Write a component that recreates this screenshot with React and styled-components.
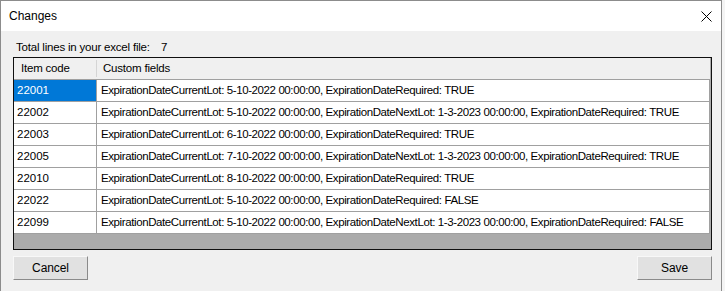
import React from "react";
import styled, { createGlobalStyle } from "styled-components";

const GlobalStyle = createGlobalStyle`
  html, body {
    margin: 0;
    padding: 0;
    background: #f4f4f4;
  }
  body {
    font-family: "Liberation Sans", Arial, sans-serif;
    font-size: 11.5px;
    letter-spacing: -0.4px;
    color: #000;
  }
`;

const Window = styled.div`
  width: 722px;
  height: 292px;
  box-sizing: border-box;
  border: 1px solid #8c8c8c;
  background: #f0f0f0;
  display: flex;
  flex-direction: column;
  overflow: hidden;
`;

const TitleBar = styled.div`
  height: 30px;
  flex: none;
  background: #fff;
  display: flex;
  align-items: center;
  justify-content: space-between;
  padding: 0 9px 0 8px;
`;

const Title = styled.span`
  font-size: 12px;
  letter-spacing: 0;
`;

const CloseButton = styled.button`
  border: 0;
  background: transparent;
  padding: 0;
  width: 12px;
  height: 12px;
  display: flex;
  align-items: center;
  justify-content: center;
  cursor: default;
`;

const Content = styled.div`
  padding: 8px 0 0 12px;
  display: flex;
  flex-direction: column;
`;

const Summary = styled.div`
  display: flex;
  height: 16px;
  line-height: 16px;
  padding-left: 3px;
  margin-bottom: 2px;
  white-space: nowrap;
  letter-spacing: -0.2px;
`;

const SummaryLabel = styled.span`
  width: 145px;
`;

const Grid = styled.div`
  width: 699px;
  height: 193px;
  box-sizing: border-box;
  border: 1px solid #101010;
  background: #ababab;
`;

const Row = styled.div`
  display: grid;
  grid-template-columns: 83px 613px;
  height: 22px;
`;

const HeaderCell = styled.div`
  position: relative;
  box-sizing: border-box;
  background: #f0f0f0;
  border-bottom: 1px solid #a0a0a0;
  padding-left: ${(p) => (p.$first ? "7px" : "6px")};
  line-height: 21px;
  white-space: nowrap;
  overflow: hidden;
  letter-spacing: -0.2px;

  &::after {
    content: "";
    display: ${(p) => (p.$first ? "block" : "none")};
    position: absolute;
    right: 0;
    top: 2px;
    bottom: 2px;
    width: 1px;
    background: #d5d5d5;
  }
`;

const Cell = styled.div`
  box-sizing: border-box;
  background: ${(p) => (p.$selected ? "#0078d7" : "#fff")};
  color: ${(p) => (p.$selected ? "#fff" : "#000")};
  border-right: 1px solid #a0a0a0;
  border-bottom: 1px solid #a0a0a0;
  padding-left: ${(p) => (p.$first ? "3px" : "4px")};
  line-height: 21px;
  white-space: nowrap;
  overflow: hidden;
  letter-spacing: ${(p) => (p.$first ? "0" : "-0.4px")};
`;

const Buttons = styled.div`
  display: flex;
  justify-content: space-between;
  width: 699px;
  margin-top: 6px;
`;

const Button = styled.button`
  width: 75px;
  height: 24px;
  box-sizing: border-box;
  background: #e1e1e1;
  border: 1px solid #adadad;
  border-top-color: #f8f8f8;
  border-left-color: #f8f8f8;
  border-right-color: #8a8a8a;
  border-bottom-color: #8a8a8a;
  font-family: inherit;
  font-size: 12px;
  letter-spacing: -0.1px;
  color: #000;
  padding: 0;
`;

const rows = [
  ["22001", "ExpirationDateCurrentLot: 5-10-2022 00:00:00, ExpirationDateRequired: TRUE"],
  ["22002", "ExpirationDateCurrentLot: 5-10-2022 00:00:00, ExpirationDateNextLot: 1-3-2023 00:00:00, ExpirationDateRequired: TRUE"],
  ["22003", "ExpirationDateCurrentLot: 6-10-2022 00:00:00, ExpirationDateRequired: TRUE"],
  ["22005", "ExpirationDateCurrentLot: 7-10-2022 00:00:00, ExpirationDateNextLot: 1-3-2023 00:00:00, ExpirationDateRequired: TRUE"],
  ["22010", "ExpirationDateCurrentLot: 8-10-2022 00:00:00, ExpirationDateRequired: TRUE"],
  ["22022", "ExpirationDateCurrentLot: 5-10-2022 00:00:00, ExpirationDateRequired: FALSE"],
  ["22099", "ExpirationDateCurrentLot: 5-10-2022 00:00:00, ExpirationDateNextLot: 1-3-2023 00:00:00, ExpirationDateRequired: FALSE"],
];

const App = () => {
  return (
    <>
      <GlobalStyle />
      <Window>
        <TitleBar>
          <Title>Changes</Title>
          <CloseButton aria-label="Close">
            <svg width="11" height="11" viewBox="0 0 11 11">
              <path d="M0.5 0.5 L10.5 10.5 M10.5 0.5 L0.5 10.5" stroke="#000" strokeWidth="1" />
            </svg>
          </CloseButton>
        </TitleBar>
        <Content>
          <Summary>
            <SummaryLabel>Total lines in your excel file:</SummaryLabel>
            <span>7</span>
          </Summary>
          <Grid>
            <Row>
              <HeaderCell $first>Item code</HeaderCell>
              <HeaderCell>Custom fields</HeaderCell>
            </Row>
            {rows.map(([code, fields], i) => (
              <Row key={code}>
                <Cell $first $selected={i === 0}>{code}</Cell>
                <Cell>{fields}</Cell>
              </Row>
            ))}
          </Grid>
          <Buttons>
            <Button>Cancel</Button>
            <Button>Save</Button>
          </Buttons>
        </Content>
      </Window>
    </>
  );
};

export default App;
